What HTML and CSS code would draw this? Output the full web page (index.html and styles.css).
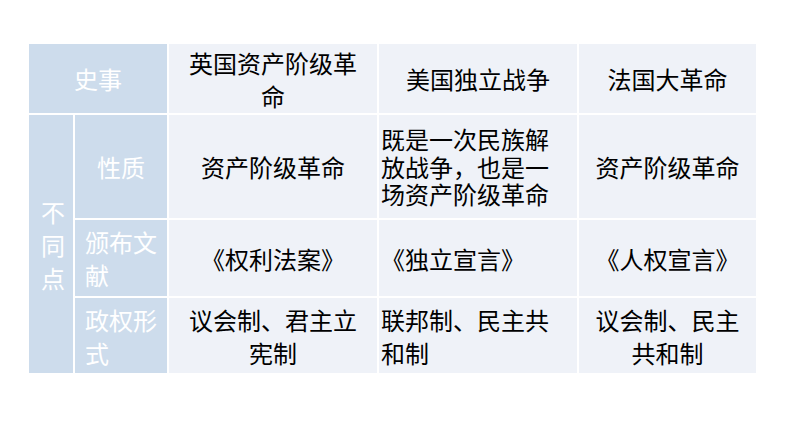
FILE: index.html
```html
<!DOCTYPE html>
<html lang="zh">
<head>
<meta charset="utf-8">
<link rel="stylesheet" href="styles.css">
</head>
<body>
<div class="page">
  <div class="table">
    <div class="cell head span2">史事</div>
    <div class="cell body">英国资产阶级革命</div>
    <div class="cell body">美国独立战争</div>
    <div class="cell body">法国大革命</div>

    <div class="cell head vert">不同点</div>
    <div class="cell head center">性质</div>
    <div class="cell body">资产阶级革命</div>
    <div class="cell body left tight">既是一次民族解放战争，也是一场资产阶级革命</div>
    <div class="cell body">资产阶级革命</div>

    <div class="cell head">颁布文献</div>
    <div class="cell body">《权利法案》</div>
    <div class="cell body left">《独立宣言》</div>
    <div class="cell body">《人权宣言》</div>

    <div class="cell head">政权形式</div>
    <div class="cell body">议会制、君主立宪制</div>
    <div class="cell body left">联邦制、民主共和制</div>
    <div class="cell body">议会制、民主共和制</div>
  </div>
</div>
</body>
</html>
```
FILE: styles.css
```css
html, body {
  margin: 0;
  padding: 0;
  background: #ffffff;
}
.page {
  padding: 44px 0 0 29px;
  font-family: "Noto Sans CJK SC", "Noto Sans", sans-serif;
}
.table {
  display: grid;
  grid-template-columns: 44px 92px 208px 198px 177px;
  grid-template-rows: 69px 103px 76px 75px;
  gap: 2px;
  background: #ffffff;
  width: 727px;
}
.cell {
  display: flex;
  align-items: center;
  font-size: 24px;
  line-height: 33px;
  box-sizing: border-box;
}
.head {
  background: #cddcec;
  color: #ffffff;
  padding: 0 8px 0 10px;
  justify-content: flex-start;
  text-align: left;
}
.head.span2 {
  grid-column: span 2;
  justify-content: center;
  text-align: center;
  padding: 0;
}
.head.center {
  justify-content: center;
  text-align: center;
  padding: 0;
}
.head.vert {
  grid-row: span 3;
  padding: 0 8px 0 12px;
  line-height: 33px;
}
.body {
  background: #eff2f8;
  color: #000000;
  justify-content: center;
  text-align: center;
  padding: 0 10px;
}
.body.left {
  justify-content: flex-start;
  text-align: left;
  padding: 0 10px 0 2px;
}
.body.tight {
  line-height: 27.5px;
}
```
